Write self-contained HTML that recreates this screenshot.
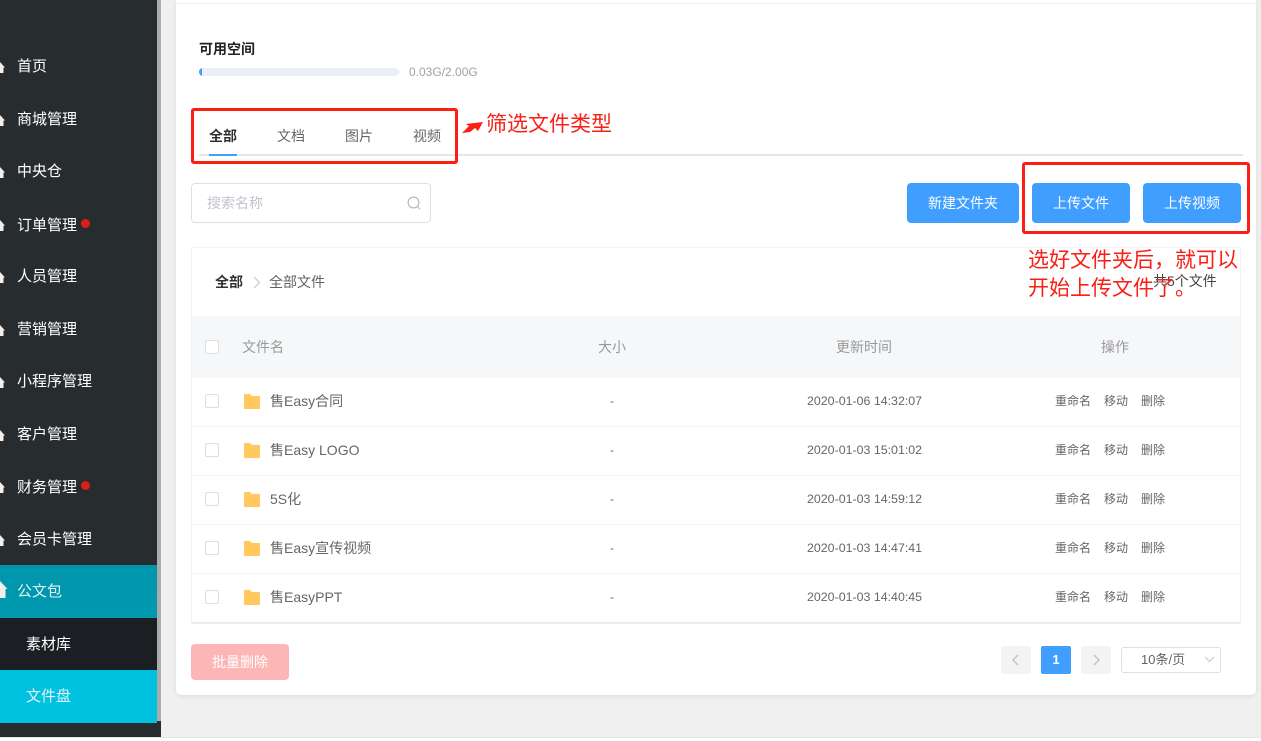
<!DOCTYPE html>
<html lang="zh-CN"><head><meta charset="utf-8"><title>文件盘</title>
<style>
html,body{margin:0;padding:0;width:1261px;height:741px;overflow:hidden;background:#f0f0f0}
body{position:relative;font-family:"Liberation Sans","Noto Sans CJK SC",sans-serif;font-size:14px;color:#666}
.a{position:absolute;box-sizing:border-box}
.t{position:absolute;white-space:nowrap;line-height:20px}
.m{color:#fff;font-size:15px;left:17px}
.c{position:absolute;box-sizing:border-box;left:205px;width:14px;height:14px;border:1px solid #dcdee6;border-radius:2px;background:#fff}
.f{position:absolute;left:244px;width:16px;height:15px}
.s{font-size:12px;color:#666}
.d{font-size:12.4px;color:#666}
.n{font-size:14px;color:#666}
.btn{position:absolute;top:183px;height:40px;background:#409eff;border-radius:4px;color:#fff;font-size:14px;text-align:center;line-height:40px}
.red{position:absolute;border:3px solid #fa1e14;border-radius:3px;box-sizing:border-box}
.an{color:#fa1e14;font-size:21px;white-space:nowrap;position:absolute;line-height:28px}
.pg{position:absolute;top:646px;width:30px;height:28px;background:#f4f4f5;border-radius:2px}
</style></head><body>
<div class="a" style="left:0;top:0;width:161px;height:737px;background:#272c2f"></div>
<div class="a" style="left:157px;top:0;width:4px;height:721px;background:#acacac"></div>
<div class="a" style="left:0;top:565px;width:157px;height:53px;background:linear-gradient(#0095ad,#0099ae)"></div>
<div class="a" style="left:0;top:618px;width:157px;height:52px;background:#1b1e22"></div>
<div class="a" style="left:0;top:670px;width:157px;height:53px;background:#00c1e0"></div>
<svg class="a" style="left:0;top:0" width="20" height="610">
<g fill="#f4efe8">
<path d="M-6 67.500L0 62L5 67.500H3.500V73H-3V67.500Z"/>
<path d="M-6 120.500L0 115L5 120.500H3.500V126H-3V120.500Z"/>
<path d="M-6 172.500L0 167L5 172.500H3.500V178H-3V172.500Z"/>
<path d="M-6 225.500L0 220L5 225.500H3.500V231H-3V225.500Z"/>
<path d="M-6 277.500L0 272L5 277.500H3.500V283H-3V277.500Z"/>
<path d="M-6 330.500L0 325L5 330.500H3.500V336H-3V330.500Z"/>
<path d="M-6 382.500L0 377L5 382.500H3.500V388H-3V382.500Z"/>
<path d="M-6 435.500L0 430L5 435.500H3.500V441H-3V435.500Z"/>
<path d="M-6 487.500L0 482L5 487.500H3.500V493H-3V487.500Z"/>
<path d="M-6 540.500L0 535L5 540.500H3.500V546H-3V540.500Z"/>
<path d="M-6 589L0 581L7.500 589H5.500V598H-4V589Z"/>
</g></svg>
<span class="t m" style="top:57px">首页</span>
<span class="t m" style="top:110px">商城管理</span>
<span class="t m" style="top:162px">中央仓</span>
<span class="t m" style="top:216px">订单管理</span>
<span class="t m" style="top:267px">人员管理</span>
<span class="t m" style="top:320px">营销管理</span>
<span class="t m" style="top:372px">小程序管理</span>
<span class="t m" style="top:425px">客户管理</span>
<span class="t m" style="top:478px">财务管理</span>
<span class="t m" style="top:530px">会员卡管理</span>
<span class="t m" style="top:582px;color:#dff3f6">公文包</span>
<span class="t m" style="top:635px;left:26px">素材库</span>
<span class="t m" style="top:687px;left:26px;color:#dff5f9">文件盘</span>
<div class="a" style="left:81px;top:219px;width:9px;height:9px;border-radius:50%;background:#dc1e14"></div>
<div class="a" style="left:81px;top:481px;width:9px;height:9px;border-radius:50%;background:#dc1e14"></div>

<div class="a" style="left:0;top:737px;width:1261px;height:1px;background:#e4e4e4"></div>
<div class="a" style="left:161px;top:738px;width:1100px;height:3px;background:#fff"></div>
<div class="a" style="left:0;top:738px;width:161px;height:3px;background:#fff"></div>

<div class="a" style="left:176px;top:0;width:1080px;height:695px;background:#fff;border-radius:0 0 5px 5px;box-shadow:0 1px 6px rgba(0,0,0,.08)"></div>
<div class="a" style="left:176px;top:3px;width:1080px;height:1px;background:#eeeeee"></div>

<span class="t" style="left:199px;top:39px;font-size:14px;font-weight:bold;color:#222">可用空间</span>
<div class="a" style="left:199px;top:68px;width:200px;height:8px;border-radius:4px;background:#ebeef5;overflow:hidden"><div style="width:3px;height:8px;background:#409eff"></div></div>
<span class="t" style="left:409px;top:62px;font-size:12px;color:#a0a0a6">0.03G/2.00G</span>

<div class="a" style="left:199px;top:154px;width:1044px;height:2px;background:#e4e7ed"></div>
<div class="a" style="left:209px;top:154px;width:28px;height:2px;background:#409eff"></div>
<span class="t" style="left:209px;top:126px;font-size:14px;font-weight:bold;color:#303133">全部</span>
<span class="t" style="left:277px;top:126px;color:#666">文档</span>
<span class="t" style="left:345px;top:126px;color:#666">图片</span>
<span class="t" style="left:413px;top:126px;color:#666">视频</span>
<div class="red" style="left:191px;top:108px;width:267px;height:56px"></div>
<svg class="a" style="left:461px;top:119px" width="24" height="16"><path d="M1 14L8 7L5 5L22 3L17 12L14 9L9 13Z" fill="#fa1e14"/></svg>
<span class="an" style="left:486px;top:111px">筛选文件类型</span>

<div class="a" style="left:191px;top:183px;width:240px;height:40px;border:1px solid #dcdfe6;border-radius:4px;background:#fff"></div>
<span class="t" style="left:207px;top:193px;color:#c0c4cc;font-size:14px">搜索名称</span>
<svg class="a" style="left:407px;top:196px" width="14" height="14" fill="none" stroke="#b5b9c2" stroke-width="1.2"><circle cx="6.500" cy="6.500" r="5.400"/><path d="M10.500 10.500L13 13"/></svg>

<div class="btn" style="left:907px;width:112px">新建文件夹</div>
<div class="btn" style="left:1032px;width:98px">上传文件</div>
<div class="btn" style="left:1143px;width:98px">上传视频</div>
<div class="red" style="left:1022px;top:162px;width:228px;height:72px"></div>

<div class="a" style="left:191px;top:247px;width:1050px;height:377px;border:1px solid #f0f3f8;border-bottom:2px solid #e9eef6;background:#fff"></div>
<span class="t" style="left:215px;top:272px;font-size:14px;font-weight:bold;color:#303133">全部</span>
<svg class="a" style="left:252px;top:276px" width="10" height="13" fill="none" stroke="#c0c4cc" stroke-width="1"><path d="M2 1L7.500 6.500L2 12"/></svg>
<span class="t" style="left:269px;top:272px;font-size:14px;color:#606266">全部文件</span>

<div class="a" style="left:192px;top:316px;width:1048px;height:62px;background:#f5f7f9"></div>
<div class="c" style="top:340px"></div>
<span class="t" style="left:242px;top:337px;font-size:14px;color:#999">文件名</span>
<span class="t" style="left:598px;top:337px;font-size:14px;color:#999">大小</span>
<span class="t" style="left:836px;top:337px;font-size:14px;color:#999">更新时间</span>
<span class="t" style="left:1101px;top:337px;font-size:14px;color:#999">操作</span>

<div class="a" style="left:192px;top:426px;width:1048px;height:1px;background:#f1f4f9"></div>
<div class="a" style="left:192px;top:475px;width:1048px;height:1px;background:#f1f4f9"></div>
<div class="a" style="left:192px;top:524px;width:1048px;height:1px;background:#f1f4f9"></div>
<div class="a" style="left:192px;top:573px;width:1048px;height:1px;background:#f1f4f9"></div>

<div class="c" style="top:394px"></div>
<svg class="f" style="top:394px" viewBox="0 0 16 15"><path d="M1 0H6L8 2H15Q16 2 16 3V14Q16 15 15 15H1Q0 15 0 14V1Q0 0 1 0Z" fill="#ffc95f"/></svg>
<span class="t n" style="left:270px;top:391px">售Easy合同</span>
<span class="t s" style="left:610px;top:391px">-</span>
<span class="t d" style="left:807px;top:391px">2020-01-06 14:32:07</span>
<span class="t s" style="left:1055px;top:391px">重命名</span><span class="t s" style="left:1104px;top:391px">移动</span><span class="t s" style="left:1141px;top:391px">删除</span>

<div class="c" style="top:443px"></div>
<svg class="f" style="top:443px" viewBox="0 0 16 15"><path d="M1 0H6L8 2H15Q16 2 16 3V14Q16 15 15 15H1Q0 15 0 14V1Q0 0 1 0Z" fill="#ffc95f"/></svg>
<span class="t n" style="left:270px;top:440px">售Easy LOGO</span>
<span class="t s" style="left:610px;top:440px">-</span>
<span class="t d" style="left:807px;top:440px">2020-01-03 15:01:02</span>
<span class="t s" style="left:1055px;top:440px">重命名</span><span class="t s" style="left:1104px;top:440px">移动</span><span class="t s" style="left:1141px;top:440px">删除</span>

<div class="c" style="top:492px"></div>
<svg class="f" style="top:492px" viewBox="0 0 16 15"><path d="M1 0H6L8 2H15Q16 2 16 3V14Q16 15 15 15H1Q0 15 0 14V1Q0 0 1 0Z" fill="#ffc95f"/></svg>
<span class="t n" style="left:270px;top:489px">5S化</span>
<span class="t s" style="left:610px;top:489px">-</span>
<span class="t d" style="left:807px;top:489px">2020-01-03 14:59:12</span>
<span class="t s" style="left:1055px;top:489px">重命名</span><span class="t s" style="left:1104px;top:489px">移动</span><span class="t s" style="left:1141px;top:489px">删除</span>

<div class="c" style="top:541px"></div>
<svg class="f" style="top:541px" viewBox="0 0 16 15"><path d="M1 0H6L8 2H15Q16 2 16 3V14Q16 15 15 15H1Q0 15 0 14V1Q0 0 1 0Z" fill="#ffc95f"/></svg>
<span class="t n" style="left:270px;top:538px">售Easy宣传视频</span>
<span class="t s" style="left:610px;top:538px">-</span>
<span class="t d" style="left:807px;top:538px">2020-01-03 14:47:41</span>
<span class="t s" style="left:1055px;top:538px">重命名</span><span class="t s" style="left:1104px;top:538px">移动</span><span class="t s" style="left:1141px;top:538px">删除</span>

<div class="c" style="top:590px"></div>
<svg class="f" style="top:590px" viewBox="0 0 16 15"><path d="M1 0H6L8 2H15Q16 2 16 3V14Q16 15 15 15H1Q0 15 0 14V1Q0 0 1 0Z" fill="#ffc95f"/></svg>
<span class="t n" style="left:270px;top:587px">售EasyPPT</span>
<span class="t s" style="left:610px;top:587px">-</span>
<span class="t d" style="left:807px;top:587px">2020-01-03 14:40:45</span>
<span class="t s" style="left:1055px;top:587px">重命名</span><span class="t s" style="left:1104px;top:587px">移动</span><span class="t s" style="left:1141px;top:587px">删除</span>

<span class="t" style="left:1153px;top:271px;font-size:14px;color:#444">共5个文件</span>
<span class="an" style="left:1028px;top:247px">选好文件夹后，就可以</span>
<span class="an" style="left:1028px;top:275px">开始上传文件了。</span>

<div class="a" style="left:191px;top:644px;width:98px;height:36px;background:#fdb6b6;border-radius:4px;color:#fff;font-size:14px;text-align:center;line-height:36px">批量删除</div>

<div class="pg" style="left:1001px"></div>
<svg class="a" style="left:1011px;top:654px" width="10" height="12" fill="none" stroke="#c0c4cc" stroke-width="1.5"><path d="M7 1L2 6L7 11"/></svg>
<div class="pg" style="left:1041px;background:#409eff;color:#fff;font-weight:bold;font-size:13px;text-align:center;line-height:28px">1</div>
<div class="pg" style="left:1081px"></div>
<svg class="a" style="left:1091px;top:654px" width="10" height="12" fill="none" stroke="#c0c4cc" stroke-width="1.5"><path d="M3 1L8 6L3 11"/></svg>
<div class="a" style="left:1121px;top:647px;width:100px;height:26px;border:1px solid #dcdfe6;border-radius:3px;background:#fff"></div>
<span class="t" style="left:1141px;top:650px;font-size:13px;color:#606266">10条/页</span>
<svg class="a" style="left:1203px;top:656px" width="12" height="8" fill="none" stroke="#c0c4cc" stroke-width="1"><path d="M2 1L6.500 5.500L11 1"/></svg>
</body></html>
